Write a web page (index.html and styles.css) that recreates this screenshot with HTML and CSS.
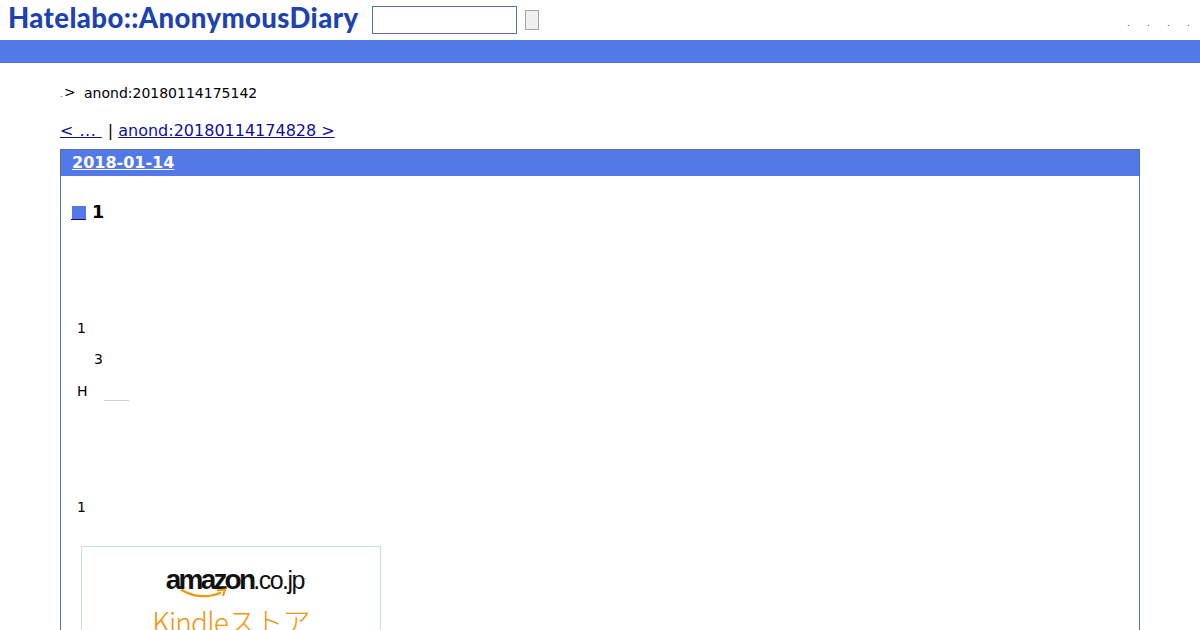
FILE: index.html
```html
<!DOCTYPE html>
<html lang="ja">
<head>
<meta charset="utf-8">
<title>anond:20180114175142</title>
<link rel="stylesheet" href="styles.css">
</head>
<body>
<header class="top">
  <a class="logo" href="#">Hatelabo::AnonymousDiary</a>
  <form class="search">
    <input class="search-input" type="text">
    <button class="search-btn" type="button"></button>
  </form>
  <nav class="tools">
    <a href="#">.</a><a href="#">.</a><a href="#">.</a><a href="#">.</a>
  </nav>
</header>
<div class="bar"></div>
<main class="page">
  <p class="crumb"><a class="crumb-dot" href="#">.</a><span class="crumb-gt">&gt;</span><span>anond:20180114175142</span></p>
  <p class="pager"><a class="prev" href="#">&lt; ... </a><span class="sep">|</span><a href="#">anond:20180114174828 &gt;</a></p>
  <section class="day">
    <h2 class="day-head"><a href="#">2018-01-14</a></h2>
    <div class="body">
      <h3 class="entry-title"><a class="mark" href="#"><span class="square"></span></a><span>1</span></h3>
      <p class="line l1">1</p>
      <p class="line l2">3</p>
      <p class="line l3">H<span class="rule"></span></p>
      <p class="line l4">1</p>
      <div class="ad">
        <div class="amazon"><span class="am-bold">amazon</span><span class="am-thin">.co.jp</span><sup class="am-dot">.</sup></div>
        <svg class="smile" width="48" height="12" viewBox="0 0 48 12"><path d="M1 1.500C12 9 28 10.500 41 4.500" fill="none" stroke="#f0960e" stroke-width="2.200"/><path d="M37 2.500L45 1.500L43 8" fill="none" stroke="#f0960e" stroke-width="2"/></svg>
        <div class="kindle">Kindleストア</div>
      </div>
    </div>
  </section>
</main>
</body>
</html>
```
FILE: styles.css
```css
html, body { margin: 0; height: 630px; overflow: hidden; background: #fff; }
body { font-family: "DejaVu Sans", sans-serif; font-size: 14px; color: #000; }
a { color: #0f0f99; }
p { margin: 0; }

.top { height: 40px; display: flex; align-items: center; padding-left: 8px; box-sizing: border-box; }
.logo { font-family: "Lato", sans-serif; font-weight: 900; font-size: 27.500px; line-height: 36px; letter-spacing: 0.400px; color: #1e43b0; text-decoration: none; width: 364px; height: 38px; margin-top: -2px; white-space: nowrap; }
.search { display: flex; align-items: center; gap: 8px; }
.search-input { width: 145px; height: 28px; box-sizing: border-box; border: 1px solid #5473a8; padding: 0; background: #fff; }
.search-btn { width: 14px; height: 20px; padding: 0; border: 1px solid #a6a6a6; background: #efefef; }
.tools { margin-left: auto; display: flex; gap: 17px; padding-right: 10px; font-size: 9px; padding-top: 6px; }
.tools a { color: #333; text-decoration: none; width: 3px; }

.bar { height: 23px; background: #5279e7; }
.page { padding: 0 60px; }
.crumb { display: flex; margin-top: 21px; height: 18px; line-height: 18px; }
.crumb-dot { font-size: 8px; color: #333; text-decoration: none; width: 4px; padding-top: 2px; }
.crumb-gt { width: 20px; margin-top: -1px; }
.pager { margin-top: 19px; font-size: 16px; line-height: 20px; height: 20px; white-space: pre; }
.prev { letter-spacing: 0.500px; }
.sep { margin: 0 5px 0 6px; }
.day { margin-top: 8px; border: 1px solid #5473a8; border-bottom: 0; height: 500px; }
.day-head { margin: 0; height: 26px; background: #5279e7; font-size: 16px; line-height: 25px; padding-left: 11px; }
.day-head a { color: #fff; }
.body { display: flow-root; padding-left: 10px; }
.entry-title { display: flex; align-items: center; margin: 25px 0 0; font-size: 17.600px; line-height: 22px; gap: 6px; }
.mark { display: inline-block; width: 15px; height: 14px; border-bottom: 1px solid #0f0f99; margin-top: 2px; box-sizing: border-box; padding-left: 1px; }
.square { display: block; width: 14px; height: 13px; background: #5279e7; }
.line { position: relative; line-height: 18px; height: 18px; padding-left: 6px; }
.l1 { margin-top: 96px; }
.l2 { margin-top: 13px; padding-left: 23px; }
.l3 { margin-top: 14px; }
.l4 { margin-top: 98px; }
.rule { position: absolute; left: 33px; top: 18px; width: 25px; height: 1px; background: #d0d0d0; }
.ad { margin: 30px 0 0 10px; width: 298px; height: 300px; border: 1px solid #c9dceb; display: flex; flex-direction: column; align-items: center; }
.amazon { margin: 15px 0 0 10px; height: 30px; line-height: 30px; font-family: "Liberation Sans", sans-serif; font-size: 28px; color: #111; white-space: nowrap; }
.am-bold { font-weight: 700; letter-spacing: -2.800px; }
.am-thin { font-weight: 400; font-size: 25px; letter-spacing: -1.500px; }
.am-dot { font-size: 8px; }
.smile { margin: -4px 0 0 -55px; display: block; }
.kindle { font-family: "Noto Sans CJK JP", "Noto Sans", sans-serif; font-weight: 300; font-size: 28px; line-height: 40px; color: #f0960e; margin-top: 1px; letter-spacing: -0.800px; white-space: nowrap; }
```
